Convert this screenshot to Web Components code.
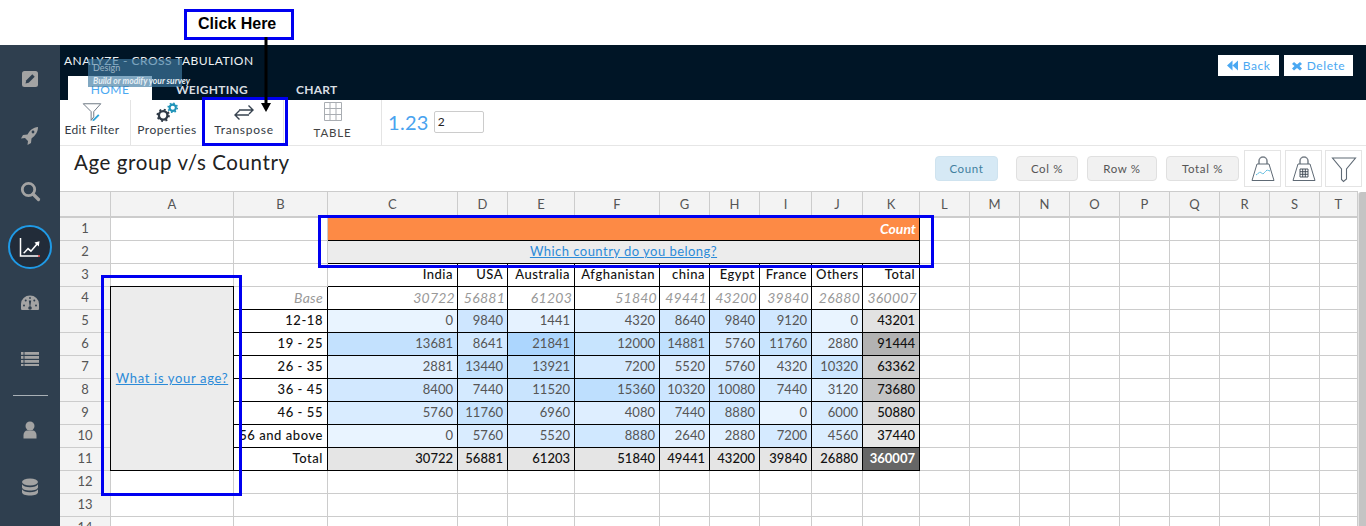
<!DOCTYPE html>
<html lang="en">
<head>
	<meta charset="UTF-8">
	<title>Analyze - Cross Tabulation</title>
	<style>
		html,body{margin:0;height:526px;overflow:hidden;background:#fff;font-family:"Lato","Open Sans",sans-serif}
	</style>
</head>
<body>

<!--page-->
<app-page>
	<app-sidebar slot="side">
		<side-icon name="pencil"></side-icon>
		<side-icon name="rocket"></side-icon>
		<side-icon name="search"></side-icon>
		<side-icon name="chart" active></side-icon>
		<side-icon name="gauge"></side-icon>
		<side-icon name="list"></side-icon>
		<side-rule></side-rule>
		<side-icon name="user"></side-icon>
		<side-icon name="db" style="margin-top:2px"></side-icon>
	</app-sidebar>
	<app-header slot="main"></app-header>
	<app-toolbar slot="main"></app-toolbar>
	<title-row slot="main">Age group v/s Country</title-row>
	<sheet-grid slot="main"></sheet-grid>
</app-page>

<!--blue boxes of the tutorial, these lie over the app-->
<call-out x="184" y="9" w="110" h="31"><b>Click Here</b></call-out>
<call-out x="202" y="97" w="86" h="49"></call-out>
<call-out x="318" y="215" w="616" h="53"></call-out>
<call-out x="101" y="275" w="141" h="221"></call-out>
<click-arrow></click-arrow>

<script>
const ICONS = {
	pencil:'<rect x="3" y="3" width="16" height="16" rx="2.5" fill="#a3a3a3"/><path d="M6.5 15.5l.8-3.2 6-6 2.4 2.4-6 6z" fill="#2f3f4f"/>',
	rocket:'<path d="M19 3c-5 .5-8 3-10.5 7.5L4 11l-2 3.500 4-.5 3 3-.5 4 3.500-2 .5-4.500C16.500 11.500 19 8 19 3z" fill="#a3a3a3"/><circle cx="14" cy="8" r="1.400" fill="#2f3f4f"/>',
	search:'<circle cx="9.500" cy="9.500" r="6.200" fill="none" stroke="#a3a3a3" stroke-width="2.800"/><path d="M14 14l5.500 5.500" stroke="#a3a3a3" stroke-width="3.200" stroke-linecap="round"/>',
	chart:'<path d="M1.500 2v18h19" fill="none" stroke="#fff" stroke-width="1.500"/><path d="M19 20h2" stroke="#d33" stroke-width="1.500"/><path d="M4 17l5-5.500 3 2.500 5-6 -1.500-1.500 5-1.300-.7 5.300-1.500-1.500-6.300 7.300-3-2.500-3.500 3.700z" fill="#fff"/>',
	gauge:'<path d="M2 16.500V12a9 8.500 0 0 1 18 0v4.500c0 1-.5 1.500-1.500 1.500h-15c-1 0-1.500-.5-1.500-1.500z" fill="#a3a3a3"/><path d="M11 16.500l1.200-8h-2.400z" fill="#2f3f4f"/><circle cx="11" cy="16" r="1.800" fill="#2f3f4f"/><g fill="#2f3f4f"><circle cx="5" cy="13.500" r="1"/><circle cx="6.700" cy="8.500" r="1"/><circle cx="11" cy="6" r=".9"/><circle cx="15.300" cy="8.500" r="1"/><circle cx="17" cy="13.500" r="1"/></g>',
	list:'<g fill="#a3a3a3"><rect x="2" y="4" width="2.500" height="2.800"/><rect x="5.500" y="4" width="14.500" height="2.800"/><rect x="2" y="8" width="2.500" height="2.800"/><rect x="5.500" y="8" width="14.500" height="2.800"/><rect x="2" y="12" width="2.500" height="2.800"/><rect x="5.500" y="12" width="14.500" height="2.800"/><rect x="2" y="16" width="2.500" height="2"/><rect x="5.500" y="16" width="14.500" height="2"/></g>',
	user:'<circle cx="11" cy="7" r="4.500" fill="#a3a3a3"/><path d="M4.500 19.500v-3.500c0-2.500 2-4.500 3.500-4.500h6c1.500 0 3.500 2 3.500 4.500v3.500z" fill="#a3a3a3"/>',
	db:'<g fill="#a3a3a3"><ellipse cx="11" cy="5" rx="8" ry="3.500"/><path d="M3 7.200v3c0 2 3.600 3.300 8 3.300s8-1.300 8-3.300v-3c-1 2-4.200 3-8 3s-7-1-8-3z"/><path d="M3 12.200v3c0 2 3.600 3.300 8 3.300s8-1.300 8-3.300v-3c-1 2-4.200 3-8 3s-7-1-8-3z"/></g>'
};

class AppPage extends HTMLElement {
	constructor() {
		super();
		this.attachShadow({ mode: 'open' }).innerHTML = `
			<style>
				:host{display:block;height:526px;overflow:hidden}
				.top{height:45px;background:#fff}
				.body{display:flex;height:481px}
				.main{flex:1;min-width:0;display:flex;flex-direction:column}
			</style>
			<div class="top"></div>
			<div class="body">
				<slot name="side"></slot>
				<div class="main"><slot name="main"></slot></div>
			</div>`;
	}
}

class AppSidebar extends HTMLElement {
	constructor() {
		super();
		this.attachShadow({ mode: 'open' }).innerHTML = `
			<style>
				:host{display:flex;flex-direction:column;align-items:center;width:60px;flex:none;box-sizing:border-box;padding-top:6px;background:#2f3f4f}
			</style>
			<slot></slot>`;
	}
}

class SideIcon extends HTMLElement {
	connectedCallback() {
		let active = this.hasAttribute('active');
		this.attachShadow({ mode: 'open' }).innerHTML = `
			<style>
				:host{display:flex;align-items:center;justify-content:center;width:60px;height:56px}
				.ring{display:flex;align-items:center;justify-content:center;box-sizing:border-box;width:44px;height:44px;border-radius:50%}
				.on{border:2px solid #1f9ae6;background:#222c39}
				svg{width:22px;height:22px}
			</style>
			<div class="ring ${active ? 'on' : ''}"><svg viewBox="0 0 22 22">${ICONS[this.getAttribute('name')]}</svg></div>`;
	}
}

class SideRule extends HTMLElement {
	constructor() {
		super();
		this.attachShadow({ mode: 'open' }).innerHTML = `
			<style>
				:host{display:block;width:35px;height:1px;margin:8px 0 6px;background:#a9b0b6}
			</style>`;
	}
}

class AppHeader extends HTMLElement {
	constructor() {
		super();
		this.attachShadow({ mode: 'open' }).innerHTML = `
			<style>
				:host{display:block;position:relative;height:55px;flex:none;background:#001526;color:#d9dee2}
				.row{display:flex;justify-content:space-between;align-items:flex-start;height:31px;padding:10px 13px 0 4px;box-sizing:border-box}
				.name{font-size:12px;letter-spacing:.48px;line-height:12px;color:#eef2f5}
				.acts{display:flex;gap:5px}
				.acts a{display:flex;align-items:center;justify-content:center;gap:5px;height:21px;background:#fff;color:#4aa8f2;font-size:12px;letter-spacing:.55px}
				.acts a.bk{width:61px}
				.acts a.dl{width:69px}
				.tabs{display:flex;margin-left:8px;font-size:12px;font-weight:700;letter-spacing:.25px}
				.tabs span{display:block;height:24px;line-height:27px;box-sizing:border-box}
				.tabs .on{width:84px;background:#fff;color:#4aa8f2;text-align:center;font-weight:400;margin-right:24px;letter-spacing:.4px}
				.tabs .w{margin-right:48px}
				.tip{position:absolute;left:28px;top:14px;width:94px;height:28px;background:rgba(64,123,162,.66);color:#9cb5c6;font-size:9px;line-height:10px;padding:4px 5px 0;box-sizing:border-box}
				.tip i{display:block;margin-top:3px;font-size:8.500px;font-weight:700;color:#e6eef4;white-space:nowrap}
			</style>
			<div class="row">
				<div class="name">ANALYZE - CROSS TABULATION</div>
				<div class="acts">
					<a class="bk"><svg width="11" height="11" viewBox="0 0 11 11"><path d="M5.500 .5v10L0 5.500zM11 .5v10L5.500 5.500z" fill="#4aa8f2"/></svg>Back</a>
					<a class="dl"><svg width="10" height="10" viewBox="0 0 10 10"><path d="M2 1l3 2.500L8 1l2 2-2.500 2L10 7.500 8 9.500 5 7 2 9.500 0 7.500 2.500 5 0 3z" fill="#4aa8f2"/></svg>Delete</a>
				</div>
			</div>
			<div class="tabs"><span class="on">HOME</span><span class="w">WEIGHTING</span><span>CHART</span></div>
			<div class="tip">Design<i>Build or modify your survey</i></div>`;
	}
}

class AppToolbar extends HTMLElement {
	constructor() {
		super();
		this.attachShadow({ mode: 'open' }).innerHTML = `
			<style>
				:host{display:flex;height:46px;flex:none;box-sizing:border-box;border-bottom:1px solid #e6e6e6;background:#fff;color:#333a44;font-size:12px}
				.tool{display:flex;flex-direction:column;align-items:center;box-sizing:border-box;padding-top:2px;border-right:1px solid #e4e4e4}
				.tool svg{display:block;height:21px}
				.tool span{margin-top:0;line-height:14px;white-space:nowrap}
				.f{width:71px;padding-right:6px;letter-spacing:.35px}
				.p{width:73px;letter-spacing:.55px}
				.t{width:80px;border-left:1px solid #e4e4e4;letter-spacing:.75px}
				.tb{width:98px;padding-top:0}
				.tb span{margin-top:4px;font-size:11.500px;letter-spacing:.8px;color:#444}
				.num{display:flex;align-items:center;padding:0 0 2px 6px;gap:5px;height:45px;box-sizing:border-box;color:#4aa3ef;font-size:20px;letter-spacing:.3px}
				input{box-sizing:border-box;width:50px;height:22px;margin:0;padding:0 3px;border:1px solid #ccc;border-radius:2px;font:12px "Lato",sans-serif;color:#222}
			</style>
			<div class="tool f">
				<svg width="22" height="24" viewBox="0 0 22 24"><path d="M1 2h20l-8 9v6l-3 4v-10z" fill="none" stroke="#5d6875" stroke-width="1"/><path d="M12 20l6-6 1.500 1.500-6 6-2 .5z" fill="#2ea3d8"/></svg>
				<span>Edit Filter</span>
			</div>
			<div class="tool p">
				<svg width="24" height="22" viewBox="0 0 24 22"><circle cx="8" cy="14" r="4.500" fill="none" stroke="#2f3a47" stroke-width="2.500"/><circle cx="8" cy="14" r="6" fill="none" stroke="#2f3a47" stroke-width="2" stroke-dasharray="2 2.700"/><circle cx="18" cy="6" r="3.300" fill="none" stroke="#1f93b8" stroke-width="2.200"/><circle cx="18" cy="6" r="4.800" fill="none" stroke="#1f93b8" stroke-width="1.600" stroke-dasharray="1.700 2.060"/></svg>
				<span>Properties</span>
			</div>
			<div class="tool t">
				<svg width="20" height="21" viewBox="0 0 20 21"><path d="M5 8h14M14.500 3.500L19 8l-4 4" fill="none" stroke="#37434f" stroke-width="1.400"/><path d="M15 13H1M5.500 8.500L1 13l4.500 4.500" fill="none" stroke="#37434f" stroke-width="1.400"/></svg>
				<span>Transpose</span>
			</div>
			<div class="tool tb">
				<svg width="20" height="21" viewBox="0 0 20 21" style="height:21px;margin-top:1px"><path d="M1.500 1.500h17v18h-17zM7 1.500v18M13 1.500v18M1.500 7.500h17M1.500 13.500h17" fill="none" stroke="#a9adb2" stroke-width="1"/></svg>
				<span>TABLE</span>
			</div>
			<div class="num">1.23<input value="2"></div>`;
	}
}

class TitleRow extends HTMLElement {
	connectedCallback() {
		let bag = (inner) => `<div class="box"><svg width="24" height="27" viewBox="0 0 24 27"><path d="M8 9V6a4 4 0 0 1 8 0v3" fill="none" stroke="#7a828a" stroke-width="1.500"/><path d="M6 9h12l5 16.500H1z" fill="none" stroke="#5f6a75" stroke-width="1"/>${inner}</svg></div>`;
		this.attachShadow({ mode: 'open' }).innerHTML = `
			<style>
				:host{display:flex;justify-content:space-between;height:45px;flex:none;box-sizing:border-box;padding:0 4px 0 14px;background:#fff}
				h1{margin:4px 0 0;font-size:20.500px;font-weight:400;line-height:24px;letter-spacing:.6px;color:#222}
				.right{display:flex;align-items:center}
				pct-btn{margin-right:9px}
				pct-btn.c{margin-right:18px}
				pct-btn.l{margin-right:5px}
				.box{display:flex;align-items:center;justify-content:center;box-sizing:border-box;width:37px;height:37px;margin-left:4px;border:1px solid #e4e4e4}
				.box.first{margin-left:0}
				.box.end{margin-left:3px}
			</style>
			<h1><slot></slot></h1>
			<div class="right">
				<pct-btn class="c" on style="width:63px">Count</pct-btn>
				<pct-btn style="width:62px">Col %</pct-btn>
				<pct-btn style="width:70px">Row %</pct-btn>
				<pct-btn class="l" style="width:73px">Total %</pct-btn>
				${bag('<path d="M5 20l4-3 3 2 4-4 3 1" fill="none" stroke="#4db4dc" stroke-width="1" stroke-dasharray="2 .6"/>').replace('class="box"', 'class="box first"')}
				${bag('<path d="M8 14h8v8H8zM8 16.700h8M8 19.300h8M10.700 14v8M13.300 14v8" fill="none" stroke="#39434e" stroke-width=".9"/>')}
				<div class="box end"><svg width="26" height="28" viewBox="0 0 26 28"><path d="M1.500 3h23l-9 11v10l-3 2.500-2-2V14z" fill="none" stroke="#5f6a75" stroke-width="1.100"/></svg></div>
			</div>`;
	}
}

class PctBtn extends HTMLElement {
	connectedCallback() {
		let on = this.hasAttribute('on');
		this.attachShadow({ mode: 'open' }).innerHTML = `
			<style>
				:host{display:block;box-sizing:border-box;height:25px;line-height:23px;text-align:center;border:1px solid ${on ? '#cfe3ef' : '#e0e0e0'};border-radius:4px;background:${on ? '#d6e9f5' : '#f1f1f1'};color:${on ? '#417f9e' : '#555'};font-size:11.500px;letter-spacing:.65px}
			</style>
			<slot></slot>`;
	}
}

// 스프레드시트 그리드: table data
const COLS = [123,94,130,50,67,85,50,50,52,51,57,50,50,50,50,50,50,50,50,38];
const LETTERS = 'ABCDEFGHIJKLMNOPQRST';
const COUNTRY = ['India','USA','Australia','Afghanistan','china','Egypt','France','Others','Total'];
const ROWS = [
	['Base',30722,56881,61203,51840,49441,43200,39840,26880,360007],
	['12-18',0,9840,1441,4320,8640,9840,9120,0,43201],
	['19 - 25',13681,8641,21841,12000,14881,5760,11760,2880,91444],
	['26 - 35',2881,13440,13921,7200,5520,5760,4320,10320,63362],
	['36 - 45',8400,7440,11520,15360,10320,10080,7440,3120,73680],
	['46 - 55',5760,11760,6960,4080,7440,8880,0,6000,50880],
	['56 and above',0,5760,5520,8880,2640,2880,7200,4560,37440],
	['Total',30722,56881,61203,51840,49441,43200,39840,26880,360007]
];

function mix(a, b, t) {
	return 'rgb(' + a.map((v, i) => Math.round(v + (b[i] - v) * t)).join(',') + ')';
}

class SheetGrid extends HTMLElement {
	connectedCallback() {
		let html = '<div class="c corner" style="grid-area:1/1"></div>';
		LETTERS.split('').forEach((l, i) => { html += `<div class="c hd" style="grid-area:1/${i + 2}">${l}</div>`; });
		for (let r = 1; r <= 14; r++) {
			html += `<div class="c num" style="grid-area:${r + 1}/1">${r}</div>`;
			for (let c = 1; c <= 20; c++) {
				let inTable = (c >= 3 && c <= 11 && r <= 3) || (c >= 1 && c <= 11 && r >= 4 && r <= 11);
				if (!inTable) html += `<div class="c" style="grid-area:${r + 1}/${c + 1}"></div>`;
			}
		}
		html += `<div class="c orange" style="grid-area:2/4/3/13">Count</div>`;
		html += `<div class="c top" style="grid-area:3/4/4/13"><a class="q">Which country do you belong?</a></div>`;
		COUNTRY.forEach((n, i) => { html += `<div class="c b head" style="grid-area:4/${i + 4}">${n}</div>`; });
		html += `<div class="c side" style="grid-area:5/2/13/3"><a>What is your age?</a></div>`;
		ROWS.forEach((row, i) => {
			let y = i + 5;
			let base = i === 0, tot = i === 7;
			html += `<div class="c b lab ${base ? 'base' : ''}" style="grid-area:${y}/3"><span>${row[0]}</span></div>`;
			row.slice(1).forEach((v, j) => {
				let last = j === 8;
				let cls = 'c b val', st = '';
				if (base) cls += ' base';
				else if (tot) { cls += last ? ' grand' : ' tot'; }
				else if (last) { cls += ' rt'; st = 'background:' + mix([232,232,232], [178,178,178], (v - 37440) / 54000); }
				else st = 'background:' + mix([233,244,255], [172,214,254], v / 21841);
				html += `<div class="${cls}" style="grid-area:${y}/${j + 4};${st}">${v}</div>`;
			});
		});
		this.attachShadow({ mode: 'open' }).innerHTML = `
			<style>
				:host{display:flex;flex:1;min-height:0;overflow:hidden;background:#fff}
				.grid{display:grid;flex:none;grid-template-columns:51px ${COLS.map(w => w + 'px').join(' ')};grid-template-rows:26px repeat(14,23px);border-top:1px solid #ccc;height:max-content;font-size:13px;color:#444}
				.c{box-sizing:border-box;min-width:0;overflow:hidden;white-space:nowrap;border-right:1px solid #ccc;border-bottom:1px solid #ccc;line-height:21px;padding:0 4px}
				.hd{background:#f3f3f3;text-align:center;color:#555;line-height:25px;border-bottom-width:2px;letter-spacing:.1px}
				.corner{background:#f3f3f3;border-bottom-width:2px}
				.num{background:#f3f3f3;text-align:center;color:#555}
				.b{border-right-color:#000;border-bottom-color:#000}
				.head{text-align:right;color:#111;font-weight:500;letter-spacing:.5px;border-bottom-color:#000}
				.lab{display:flex;justify-content:flex-end;color:#111;font-weight:500;letter-spacing:.55px}
				.lab span{flex:none}
				.lab.base{font-weight:400;font-style:italic;color:#999;font-size:14px;letter-spacing:.3px}
				.val{text-align:right;color:#555}
				.val.base{font-style:italic;color:#999;padding-right:2px;font-size:14px;letter-spacing:.25px}
				.tot{background:#e5e5e5;color:#111;font-weight:500}
				.rt{color:#111;font-weight:500}
				.grand{background:#666;color:#fff;font-weight:700}
				.orange{background:#fd8a45;color:#fff;font-weight:700;font-style:italic;text-align:right;border-right-color:#000;border-bottom-color:#000;font-size:14px;line-height:22px;padding-right:3px}
				.top{background:#ececec;text-align:center;border-right-color:#000;border-bottom-color:#000}
				.side{display:flex;align-items:center;justify-content:center;background:#ececec;border:1px solid #000;margin-left:-1px;margin-top:-1px;padding:0}
				a{color:#2b8ad8;text-decoration:underline;letter-spacing:.66px}
				a.q{letter-spacing:.47px}
				.bar{flex:1;margin-top:1px;background:#c4c4c4;border-left:1px solid #e2e2e2;border-radius:3px 0 0 0}
			</style>
			<div class="grid">${html}</div>
			<div class="bar"></div>`;
	}
}

// 튜토리얼 오버레이
class CallOut extends HTMLElement {
	connectedCallback() {
		let a = (n) => this.getAttribute(n);
		this.attachShadow({ mode: 'open' }).innerHTML = `
			<style>
				:host{position:absolute;left:${a('x')}px;top:${a('y')}px;width:${a('w')}px;height:${a('h')}px;box-sizing:border-box;border:3px solid #0000f0;font:700 16px "Liberation Sans",Arial,sans-serif;color:#000;pointer-events:none}
				.t{padding:3px 0 0 11px;line-height:18px}
			</style>
			<div class="t"><slot></slot></div>`;
	}
}

class ClickArrow extends HTMLElement {
	constructor() {
		super();
		this.attachShadow({ mode: 'open' }).innerHTML = `
			<style>
				:host{position:absolute;left:260px;top:37px;width:12px;height:76px}
			</style>
			<svg width="12" height="76" viewBox="0 0 12 76"><path d="M6 0v68" stroke="#000" stroke-width="3"/><path d="M1 66h10l-5 9z" fill="#000"/></svg>`;
	}
}

customElements.define('app-page', AppPage);
customElements.define('app-sidebar', AppSidebar);
customElements.define('side-icon', SideIcon);
customElements.define('side-rule', SideRule);
customElements.define('app-header', AppHeader);
customElements.define('app-toolbar', AppToolbar);
customElements.define('title-row', TitleRow);
customElements.define('pct-btn', PctBtn);
customElements.define('sheet-grid', SheetGrid);
customElements.define('call-out', CallOut);
customElements.define('click-arrow', ClickArrow);
</script>

</body>
</html>
